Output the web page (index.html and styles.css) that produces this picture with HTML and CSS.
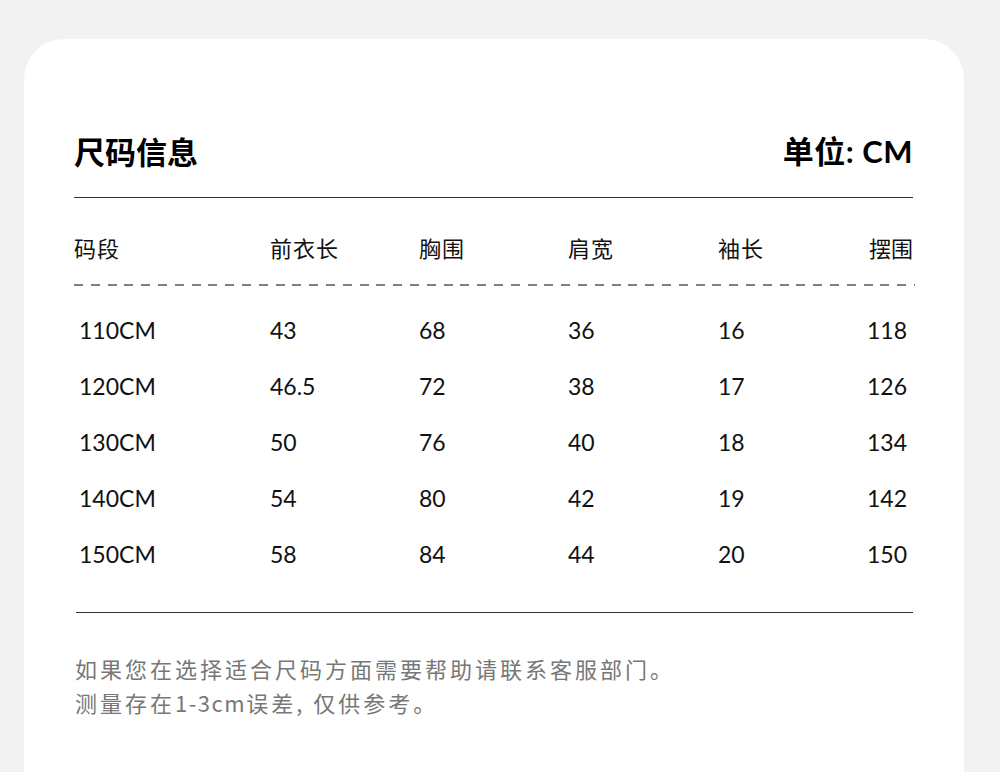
FILE: index.html
```html
<!DOCTYPE html>
<html lang="zh-CN">
<head>
<meta charset="utf-8">
<title>尺码信息</title>
<link rel="stylesheet" href="styles.css">
</head>
<body>
<div class="card">
  <div class="title-row">
    <h1 class="title">尺码信息</h1>
    <div class="unit">单位: CM</div>
  </div>
  <div class="rule"></div>
  <div class="grid head">
    <div>码段</div><div>前衣长</div><div>胸围</div><div>肩宽</div><div>袖长</div><div>摆围</div>
  </div>
  <div class="dash"></div>
  <div class="rows">
    <div class="grid row"><div class="first">110CM</div><div>43</div><div>68</div><div>36</div><div>16</div><div>118</div></div>
    <div class="grid row"><div class="first">120CM</div><div>46.5</div><div>72</div><div>38</div><div>17</div><div>126</div></div>
    <div class="grid row"><div class="first">130CM</div><div>50</div><div>76</div><div>40</div><div>18</div><div>134</div></div>
    <div class="grid row"><div class="first">140CM</div><div>54</div><div>80</div><div>42</div><div>19</div><div>142</div></div>
    <div class="grid row"><div class="first">150CM</div><div>58</div><div>84</div><div>44</div><div>20</div><div>150</div></div>
  </div>
  <div class="rule rule-bottom"></div>
  <p class="note">如果您在选择适合尺码方面需要帮助请联系客服部门。<br>测量存在<span class="latin">1-3cm</span>误差, 仅供参考。</p>
</div>
</body>
</html>
```

FILE: styles.css
```css
html, body {
  margin: 0;
  padding: 0;
  background: #f2f2f2;
}
body {
  padding: 39px 0 0 24px;
  font-family: "Noto Sans CJK SC", "Noto Sans", sans-serif;
  color: #111;
}
.card {
  width: 940px;
  height: 760px;
  box-sizing: border-box;
  background: #fff;
  border-radius: 40px 40px 0 0;
  padding: 92px 51px 0 50px;
}
.title-row {
  display: flex;
  justify-content: space-between;
  align-items: center;
  height: 40px;
}
.title {
  margin: 0;
  font-size: 31px;
  font-weight: 700;
  line-height: 40px;
  color: #000;
}
.unit {
  font-family: "Lato", "Noto Sans CJK SC", sans-serif;
  font-size: 31px;
  font-weight: 700;
  line-height: 40px;
  letter-spacing: 0.5px;
  color: #000;
}
.rule {
  margin-top: 26px;
  height: 1px;
  background: #333;
}
.grid {
  display: grid;
  grid-template-columns: 196px 149px 149px 150px 149px 1fr;
}
.head {
  margin-top: 34px;
  font-size: 22px;
  line-height: 30px;
  letter-spacing: 1px;
  color: #111;
}
.head > div:last-child {
  text-align: right;
  letter-spacing: 0;
}
.dash {
  margin-top: 22px;
  height: 2px;
  margin-right: -2px;
  background: repeating-linear-gradient(to right, #808080 0 9px, transparent 9px 16.8px);
}
.rows {
  padding-top: 16px;
}
.row {
  height: 56px;
  align-items: center;
  font-family: "Lato", "Noto Sans", sans-serif;
  font-size: 23px;
  color: #111;
}
.row .first {
  padding-left: 5px;
}
.rule-bottom {
  margin-top: 30px;
  margin-left: 2px;
}
.note {
  margin: 38px 0 0 1px;
  font-size: 22px;
  line-height: 34px;
  letter-spacing: 3px;
  color: #777;
}
.note .latin {
  letter-spacing: 1.5px;
}
```
